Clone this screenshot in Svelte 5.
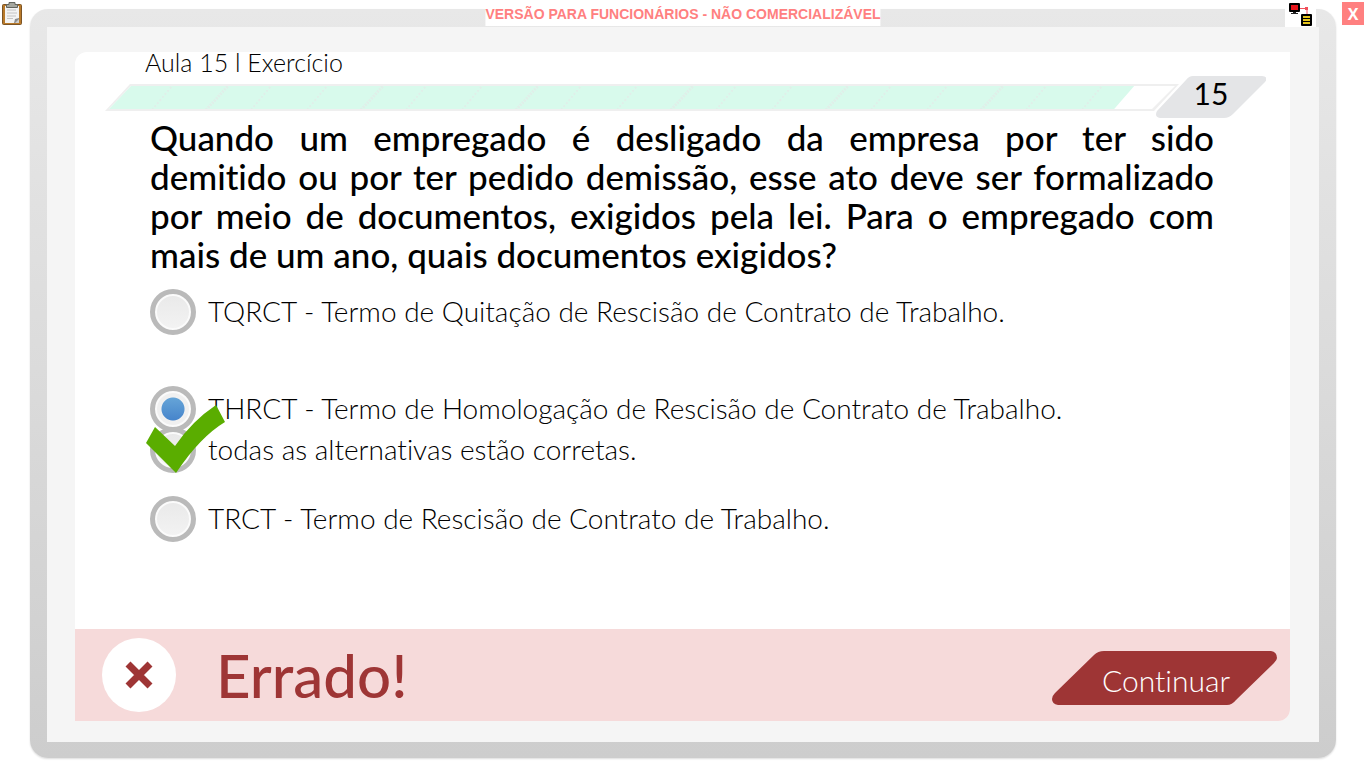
<script>
  const question = [
    'Quando um empregado é desligado da empresa por ter sido',
    'demitido ou por ter pedido demissão, esse ato deve ser formalizado',
    'por meio de documentos, exigidos pela lei. Para o empregado com',
    'mais de um ano, quais documentos exigidos?'
  ];
  const options = [
    { id: 'tqrct', text: 'TQRCT - Termo de Quitação de Rescisão de Contrato de Trabalho.' },
    { id: 'thrct', text: 'THRCT - Termo de Homologação de Rescisão de Contrato de Trabalho.' },
    { id: 'todas', text: 'todas as alternativas estão corretas.', correct: true },
    { id: 'trct', text: 'TRCT - Termo de Rescisão de Contrato de Trabalho.' }
  ];
  let selected = $state('thrct');
</script>

<div class="page">
  <button class="clipboard" aria-label="Anotações">
    <svg width="20" height="24" viewBox="0 0 20 24">
      <rect x="0.5" y="2.5" width="19" height="20" rx="1" fill="#b97a2a" stroke="#7c5426" />
      <path d="M3 4h14v17H3z" fill="#f3f3f3" />
      <path d="M5 8h9M5 11h10M5 14h9M5 16.500h6" stroke="#c4c4c4" />
      <path d="M12 21l1-4 4-1v5z" fill="#8c8c8c" />
      <path d="M13 21l4-4v4z" fill="#cfcfcf" />
      <path d="M7 .5h6v2h2.500v3h-11v-3H7z" fill="#a5a79f" stroke="#63655e" />
    </svg>
  </button>
  <p class="notice">VERSÃO PARA FUNCIONÁRIOS - NÃO COMERCIALIZÁVEL</p>
  <div class="network">
    <svg width="31" height="27" viewBox="0 0 31 27">
      <rect x="4" y="3" width="11" height="9" rx="1" fill="#000" />
      <rect x="6" y="5" width="7" height="5" fill="#e8151b" />
      <path d="M8 12h3v1h2v1H6v-1h2z" fill="#222" />
      <path d="M15 8.500h7v6" fill="none" stroke="#f0515c" />
      <path d="M20 7h3v3h-3z" fill="#f0515c" />
      <rect x="16" y="14" width="11" height="12" rx="1" fill="#000" />
      <path d="M18 16h7v2h-7zM18 19h7v2h-7zM18 22h7v2h-7z" fill="#e6c51c" />
    </svg>
  </div>
  <button class="close" aria-label="Fechar">X</button>

  <div class="frame">
    <div class="inner">
      <main class="panel">
        <h1>Aula 15 l Exercício</h1>

        <div class="progress">
          <div class="track">
            <div class="trough">
              <div class="fill">
                <svg width="100%" height="24" aria-hidden="true">
                  <defs>
                    <pattern id="marks" width="155" height="24" patternUnits="userSpaceOnUse">
                      <g fill="none" stroke="#e0efe9">
                        <path d="M45 24L65 0M144 24L164 0M-11 24L9 0" stroke-dasharray="2 2" stroke-width="2" />
                        <path d="M99 24L121 0" stroke-dasharray="2 1" stroke-width="3" />
                      </g>
                    </pattern>
                  </defs>
                  <rect width="100%" height="24" fill="url(#marks)" />
                </svg>
              </div>
            </div>
          </div>
          <div class="count">
            <svg width="110" height="42" viewBox="0 0 110 42" aria-hidden="true">
              <path d="M37 0H106Q113 1 109 6L77 38Q73 42 68 42H4Q-2 41 1 35L30 4Q33 0 37 0Z" fill="#e4e5e7" />
            </svg>
            <span>15</span>
          </div>
        </div>

        <fieldset>
          <legend>
            {#each question as line}
              <span>{line}</span>
            {/each}
          </legend>
          {#each options as option (option.id)}
            <div class="option {option.id}">
              <input type="radio" name="resposta" id={option.id} value={option.id} bind:group={selected} />
              <label for={option.id}>{option.text}</label>
              {#if option.correct}
                <svg class="check" width="80" height="70" viewBox="0 0 80 70" aria-hidden="true">
                  <path d="M0 39L9 23L29 42Q46 17 70 1L79 18Q54 33 30 69Z" fill="#5aad00" />
                </svg>
              {/if}
            </div>
          {/each}
        </fieldset>

        <footer>
          <span class="badge">
            <svg width="28" height="28" viewBox="0 0 28 28" aria-hidden="true">
              <path d="M3 3L25 25M25 3L3 25" stroke="#9e3535" stroke-width="7" />
            </svg>
          </span>
          <strong>Errado!</strong>
          <button class="continue">
            <svg width="226" height="56" viewBox="0 0 226 56" aria-hidden="true">
              <path d="M52 1H219Q225 2 225 8Q225 10 222 13L184 50Q180 55 175 55H6Q0 54 0 49Q0 46 3 43L42 5Q46 1 52 1Z" fill="#9e3535" />
            </svg>
            <span>Continuar</span>
          </button>
        </footer>
      </main>
    </div>
  </div>
</div>

<style>
  :global(body) { margin: 0; background: #fff; }
  .page {
    position: relative;
    display: flex;
    box-sizing: border-box;
    min-height: 100vh;
    padding: 9px 30px 10px;
    font-family: Lato, "Liberation Sans", sans-serif;
    font-variant-ligatures: none;
    color: #000;
  }
  button { border: 0; padding: 0; background: none; font: inherit; font-variant-ligatures: none; cursor: pointer; }
  svg { display: block; }
  .clipboard { position: absolute; left: 2px; top: 2px; }
  .notice {
    position: absolute;
    top: 0;
    left: 50%;
    transform: translateX(-50%);
    margin: 0;
    padding: 5px 0 2px;
    background: #fff;
    color: #ff8080;
    font: bold 14px/19px "Liberation Sans", sans-serif;
    white-space: nowrap;
  }
  .network { position: absolute; top: 0; right: 50px; background: #fff; }
  .close {
    position: absolute;
    top: 2px;
    right: 2px;
    width: 22px;
    height: 23px;
    background: #ff8080;
    color: #fff;
    font: bold 16px/20px "Open Sans", sans-serif;
  }
  .frame {
    flex: 1;
    display: flex;
    padding: 18px 17px 16px;
    border-radius: 18px;
    background: linear-gradient(#e8e8e8, #cdcdcd);
    box-shadow: 0 1px 2px #ddd;
  }
  .inner { flex: 1; display: flex; padding: 25px 29px 21px 28px; background: #f5f5f5; }
  .panel {
    flex: 1;
    display: flex;
    flex-direction: column;
    border-radius: 12px 0 12px 0;
    background: #fff;
  }
  h1 { margin: -4px 0 0 70px; font-size: 25px; font-weight: 300; line-height: 28px; }
  .progress { display: flex; align-items: flex-start; margin: 0 24px 0 30px; }
  .track {
    flex: 1;
    margin: 8px -23px 0 0;
    padding: 2px;
    background: #efefef;
    clip-path: polygon(25px 0, 100% 0, calc(100% - 25px) 100%, 0 100%);
  }
  .trough {
    height: 23px;
    background: #fff;
    clip-path: polygon(24px 0, calc(100% - 2px) 0, calc(100% - 25px) 100%, 2px 100%);
  }
  .fill {
    width: 96%;
    height: 23px;
    background: #d8faec;
    clip-path: polygon(0 0, 100% 0, calc(100% - 20px) 100%, 0 100%);
  }
  .count { display: grid; place-items: center; }
  .count > * { grid-area: 1 / 1; position: relative; }
  .count span { padding-bottom: 8px; font-size: 30px; line-height: 32px; }
  fieldset { margin: 0; padding: 0 76px 0 75px; border: 0; }
  legend {
    width: 100%;
    padding: 0;
    margin-bottom: 15px;
    font-size: 35px;
    font-weight: 500;
    line-height: 39px;
  }
  legend span { display: block; text-align: justify; text-align-last: justify; }
  legend span:last-child { text-align-last: left; }
  .option { position: relative; display: flex; align-items: center; gap: 12px; height: 46px; }
  .option label { padding-bottom: 3px; font-size: 28px; font-weight: 300; line-height: 40px; }
  .thrct { margin-top: 51px; }
  .todas { margin-top: -5px; }
  .trct { margin-top: 23px; margin-bottom: 24px; }
  input {
    appearance: none;
    flex: none;
    width: 46px;
    height: 46px;
    margin: 0;
    border: 5px solid #bababa;
    border-radius: 50%;
    background: linear-gradient(#e9e9e9, #f3f3f3);
    box-shadow: inset 0 0 0 2px #fbfbfb;
  }
  input:checked {
    background: radial-gradient(circle, transparent 11px, #f0f0f0 12px), linear-gradient(#6faedb, #3d7bc8);
  }
  .check { position: absolute; left: -4px; top: -23px; }
  footer {
    display: flex;
    align-items: center;
    height: 92px;
    margin-top: auto;
    padding: 0 12px 0 27px;
    border-bottom-right-radius: 12px;
    background: #f6dada;
  }
  .badge {
    display: grid;
    place-items: center;
    width: 74px;
    height: 74px;
    border-radius: 50%;
    background: #fff;
  }
  strong { margin-left: 40px; color: #9e3535; font-size: 60px; font-weight: 500; line-height: 64px; }
  .continue { display: grid; place-items: center; margin: 6px 0 0 auto; color: #fff; }
  .continue > * { grid-area: 1 / 1; position: relative; }
  .continue span { padding: 4px 0 0 2px; font-size: 30px; font-weight: 300; line-height: 40px; }
</style>
